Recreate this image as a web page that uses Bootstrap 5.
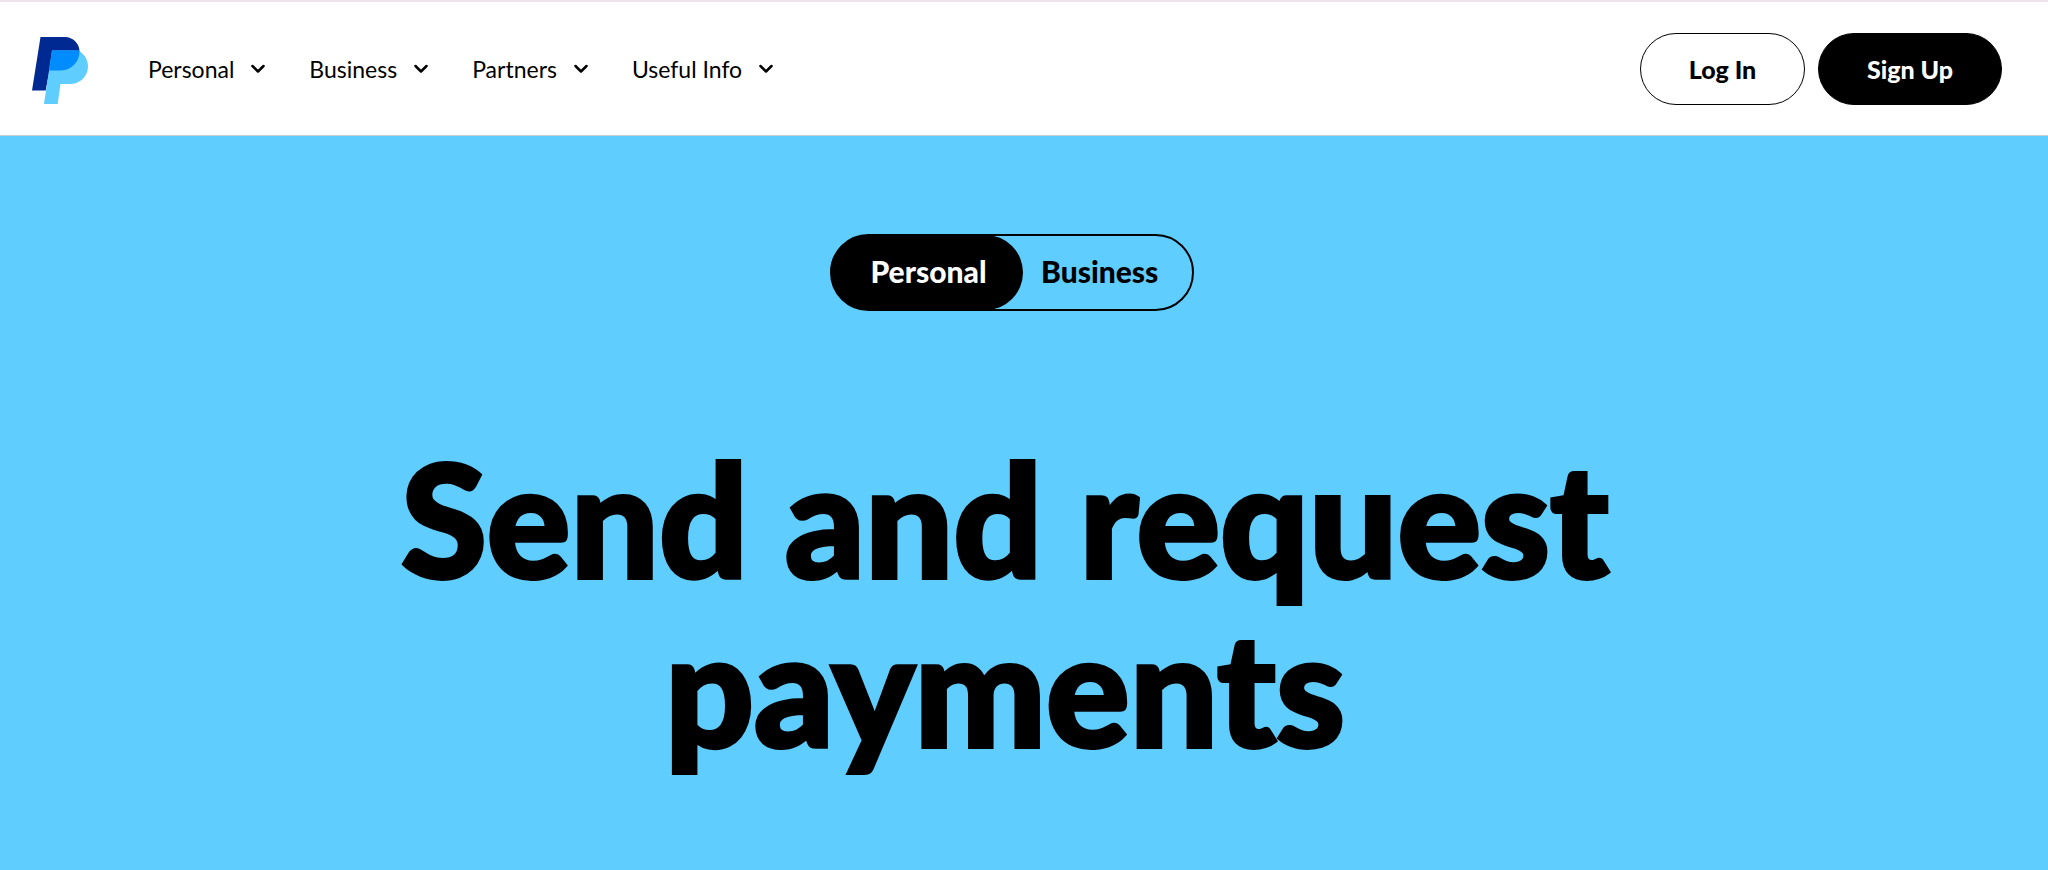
<!DOCTYPE html>
<html lang="en">
<head>
<meta charset="utf-8">
<meta name="viewport" content="width=device-width, initial-scale=1">
<title>PayPal</title>
<link href="https://cdn.jsdelivr.net/npm/bootstrap@5.3.0/dist/css/bootstrap.min.css" rel="stylesheet">
<style>
  body { font-family: Lato, "Liberation Sans", sans-serif; color: #000; background: #60cdff; }
  .site-header { border-top: 2px solid #f0e2ea; border-bottom: 1px solid #c9cdd0; padding: 31px 46px 30px 32px; }
  .brand-mark { width: 56px; height: 68px; }
  .main-menu { margin-left: 60px; gap: 44px; }
  .menu-toggle { font-size: 23px; line-height: 32px; gap: 17px; color: #000; background: none; border: 0; padding: 0; }
  .menu-toggle svg { width: 14px; height: 10px; }
  .header-actions { gap: 13px; }
  .pill { font-size: 25px; line-height: 32px; font-weight: 900; height: 72px; border: 1px solid #000; border-radius: 36px; }
  .pill-login { width: 165px; color: #000; background: #fff; }
  .pill-signup { width: 184px; color: #fff; background: #000; }
  .hero { padding: 98px 24px 72px 0; }
  .audience { border: 2px solid #000; border-radius: 39px; width: 364px; height: 77px; }
  .audience label { font-size: 30px; line-height: 32px; font-weight: 900; padding-bottom: 4px; cursor: pointer; }
  .audience .side-start { width: 192px; margin: -1px; padding-left: 3px; border-radius: 38px; }
  .audience .side-end { padding-left: 19px; }
  .audience .btn-check:checked + label { background: #000; color: #fff; }
  .hero-title { font-size: 156px; line-height: 169px; font-weight: 900; -webkit-text-stroke: 4px #000; margin-top: 122px; margin-bottom: 0; padding-right: 14px; max-width: 1360px; }
</style>
</head>
<body>
<header class="site-header bg-white d-flex align-items-center justify-content-between">
  <div class="d-flex align-items-center">
    <a href="#" aria-label="PayPal" class="d-flex pt-1">
      <svg class="brand-mark" viewBox="0 0 56 68" aria-hidden="true">
        <path fill="#002991" d="M8.500 0H33C41 0 47.500 6.500 47.500 14.500C47.500 25.500 39 33.500 28 33.500H17.500L13.700 53.500H0Z"/>
        <path fill="#60cdff" d="M20 13.500H46C51.500 16 56 22 56 29C56 39.500 48 47 38 47H28.500L25.700 67H12Z"/>
        <path fill="#008cff" d="M20 13.500H47.400C47.900 25 39 33.500 28 33.500H17Z"/>
      </svg>
    </a>
    <nav class="main-menu d-flex" aria-label="Main">
      <button type="button" class="menu-toggle d-flex align-items-center">Personal <svg viewBox="0 0 14 10" fill="none" stroke="#000" stroke-width="2.500" stroke-linecap="round" stroke-linejoin="round" aria-hidden="true"><path d="M1.500 2L7 7.500L12.500 2"/></svg></button>
      <button type="button" class="menu-toggle d-flex align-items-center">Business <svg viewBox="0 0 14 10" fill="none" stroke="#000" stroke-width="2.500" stroke-linecap="round" stroke-linejoin="round" aria-hidden="true"><path d="M1.500 2L7 7.500L12.500 2"/></svg></button>
      <button type="button" class="menu-toggle d-flex align-items-center">Partners <svg viewBox="0 0 14 10" fill="none" stroke="#000" stroke-width="2.500" stroke-linecap="round" stroke-linejoin="round" aria-hidden="true"><path d="M1.500 2L7 7.500L12.500 2"/></svg></button>
      <button type="button" class="menu-toggle d-flex align-items-center">Useful Info <svg viewBox="0 0 14 10" fill="none" stroke="#000" stroke-width="2.500" stroke-linecap="round" stroke-linejoin="round" aria-hidden="true"><path d="M1.500 2L7 7.500L12.500 2"/></svg></button>
    </nav>
  </div>
  <div class="header-actions d-flex">
    <button type="button" class="pill pill-login">Log In</button>
    <button type="button" class="pill pill-signup">Sign Up</button>
  </div>
</header>
<main class="hero d-flex flex-column align-items-center">
  <div class="audience d-flex" role="radiogroup" aria-label="Account type">
    <input class="btn-check" type="radio" name="audience" id="aud-personal" checked>
    <label class="side-start d-flex align-items-center justify-content-center" for="aud-personal">Personal</label>
    <input class="btn-check" type="radio" name="audience" id="aud-business">
    <label class="side-end d-flex align-items-center flex-grow-1" for="aud-business">Business</label>
  </div>
  <h1 class="hero-title text-center">Send and request payments</h1>
</main>
<script src="https://cdn.jsdelivr.net/npm/bootstrap@5.3.0/dist/js/bootstrap.bundle.min.js"></script>
</body>
</html>
